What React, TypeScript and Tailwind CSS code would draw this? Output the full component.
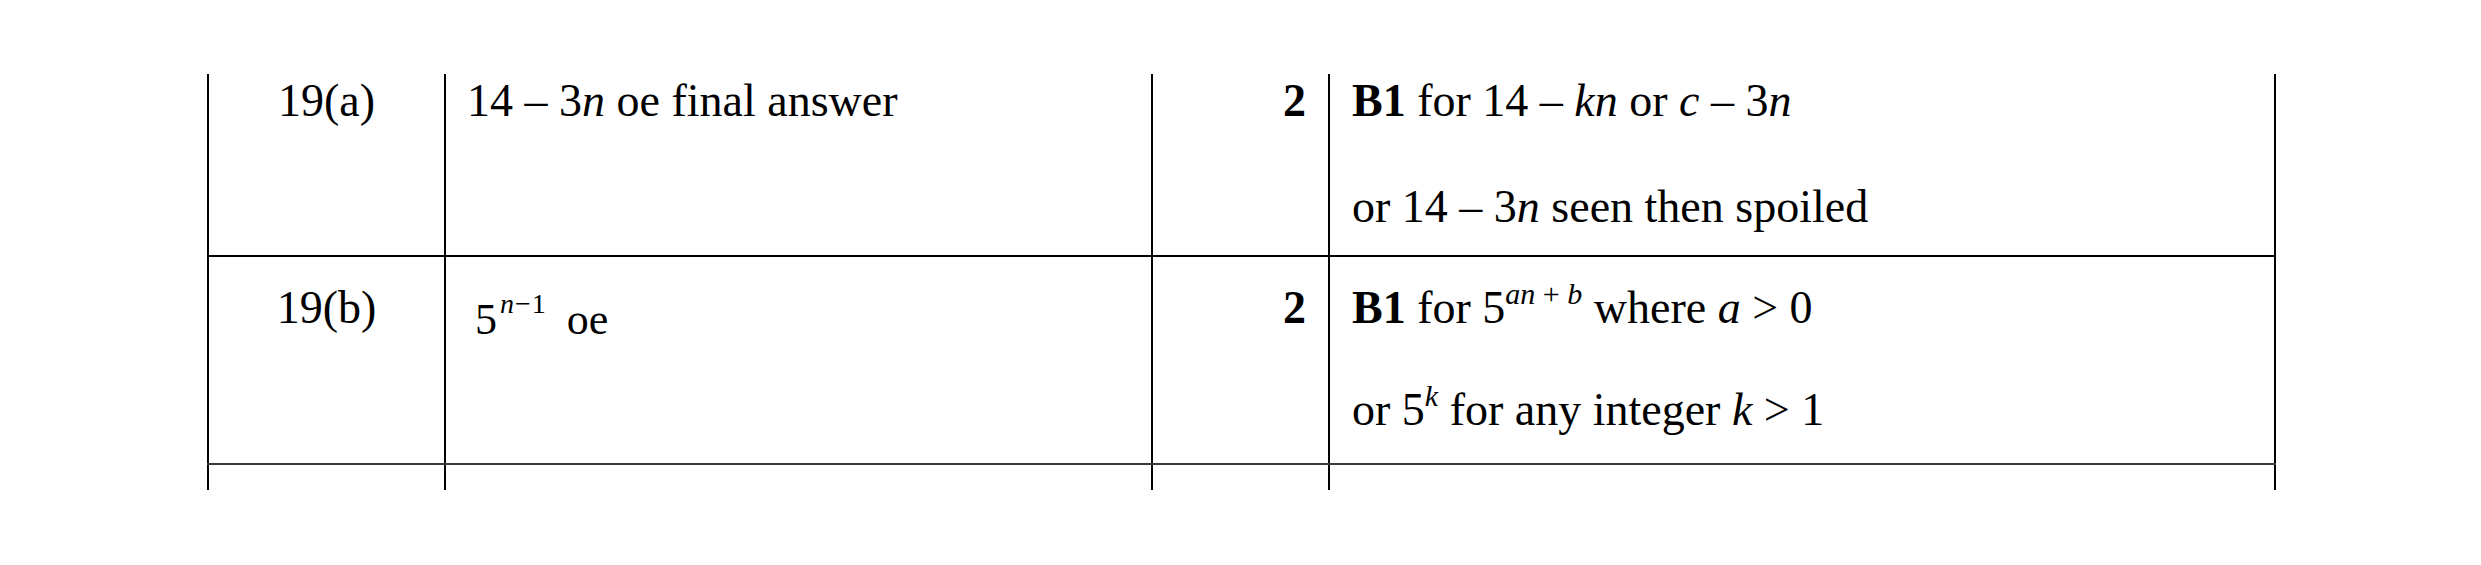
const serif = "font-['Liberation_Serif','Times_New_Roman',serif]"

function Sup({ children, className }: { children: React.ReactNode; className: string }) {
  return <sup className={className}>{children}</sup>
}

export default function App() {
  return (
    <div className={`min-h-[565px] bg-white pl-[207px] pt-[74px] text-[46px] leading-[53px] text-black ${serif}`}>
      <div className="w-[2069px]">
        {/* 19(a) */}
        <div className="flex h-[183px] border-b-2 border-black">
          <div className="w-[237px] border-l-2 border-black text-center">19(a)</div>
          <div className="w-[707px] border-l-2 border-black pl-[21px]">
            14 – 3<i>n</i> oe final answer
          </div>
          <div className="w-[177px] border-l-2 border-black pr-[22px] text-right font-bold">2</div>
          <div className="flex-1 border-x-2 border-black pl-[22px]">
            <p>
              <b>B1</b> for 14 – <i>kn</i> or <i>c</i> – 3<i>n</i>
            </p>
            <p className="mt-[53px]">
              or 14 – 3<i>n</i> seen then spoiled
            </p>
          </div>
        </div>

        {/* 19(b) */}
        <div className="flex h-[208px] border-b-2 border-[#3a3a3a]">
          <div className="w-[237px] border-l-2 border-black pt-[24px] text-center">19(b)</div>
          <div className="w-[707px] border-l-2 border-black pl-[29px] pt-[24px]">
            <span className="align-[-11px] text-[44px] leading-none">
              5
              <Sup className="ml-[3px] top-[-21px] text-[28px] tracking-[1px]">
                <i>n</i>−1
              </Sup>
            </span>
            <span className="ml-[20px] align-[-11px] text-[44px] leading-none">oe</span>
          </div>
          <div className="w-[177px] border-l-2 border-black pr-[22px] pt-[24px] text-right font-bold">2</div>
          <div className="flex-1 border-x-2 border-black pl-[22px] pt-[24px]">
            <p>
              <b>B1</b> for 5
              <Sup className="top-[-19px] text-[30px]">
                <i>an</i> + <i>b</i>
              </Sup>{" "}
              where <i>a</i> &gt; 0
            </p>
            <p className="mt-[49px]">
              or 5<Sup className="top-[-19px] text-[30px]"><i>k</i></Sup> for any integer <i>k</i> &gt; 1
            </p>
          </div>
        </div>

        {/* next row, cut off */}
        <div className="flex h-[25px]">
          <div className="w-[237px] border-l-2 border-black" />
          <div className="w-[707px] border-l-2 border-black" />
          <div className="w-[177px] border-l-2 border-black" />
          <div className="flex-1 border-x-2 border-black" />
        </div>
      </div>
    </div>
  )
}
